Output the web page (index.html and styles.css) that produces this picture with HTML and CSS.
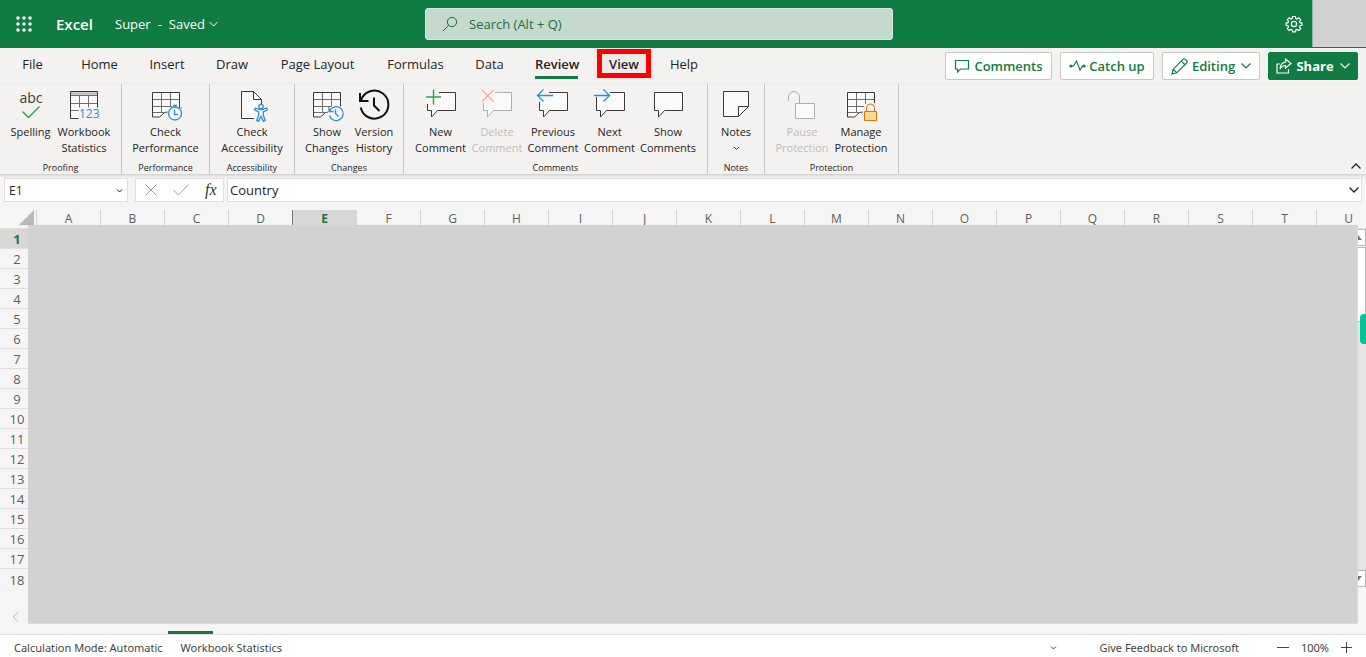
FILE: index.html
```html
<!DOCTYPE html>
<html lang="en">
<head>
<meta charset="utf-8">
<title>Super - Excel</title>
<link rel="stylesheet" href="styles.css">
</head>
<body>
<header class="topbar">
  <button class="waffle" aria-label="App launcher"><svg width="16" height="16" viewBox="0 0 16 16" fill="currentColor"><circle cx="2" cy="2" r="1.7"/><circle cx="8" cy="2" r="1.7"/><circle cx="14" cy="2" r="1.7"/><circle cx="2" cy="8" r="1.7"/><circle cx="8" cy="8" r="1.7"/><circle cx="14" cy="8" r="1.7"/><circle cx="2" cy="14" r="1.7"/><circle cx="8" cy="14" r="1.7"/><circle cx="14" cy="14" r="1.7"/></svg></button>
  <span class="brand">Excel</span>
  <button class="doc"><span>Super</span><span>-</span><span>Saved</span><svg width="9" height="6" viewBox="0 0 9 6"><path d="M.5 1l4 4 4-4"/></svg></button>
  <div class="search">
    <svg width="16" height="16" viewBox="0 0 16 16"><circle cx="10" cy="6" r="4.6"/><path d="M6.7 9.3L.8 15.2"/></svg>
    <input type="text" aria-label="Search" placeholder="Search (Alt + Q)">
  </div>
  <button class="gear" aria-label="Settings"><svg width="18" height="18" viewBox="0 0 18 18"><path d="M7.6 1.5h2.8l.4 2 1.2.5 1.8-1.2 1.9 1.9-1.2 1.8.5 1.2 1.9.4v2.2l-1.9.4-.5 1.2 1.2 1.8-1.9 1.9-1.8-1.2-1.2.5-.4 2H7.6l-.4-2-1.2-.5-1.8 1.2-1.9-1.9 1.2-1.8-.5-1.2-1.9-.4V8.100l1.900-.4.5-1.2-1.200-1.800 1.900-1.900L6 4l1.200-.5z"/><circle cx="9" cy="9" r="2.6"/></svg></button>
  <div class="account"></div>
</header>

<div class="tabrow">
  <nav class="tabs">
    <button>File</button><button>Home</button><button>Insert</button><button>Draw</button><button>Page Layout</button><button>Formulas</button><button>Data</button><button class="active"><span>Review</span></button><button class="marked">View</button><button>Help</button>
  </nav>
  <div class="actions">
    <button class="action comments"><svg width="16" height="16" viewBox="0 0 16 16"><path d="M1.500 2.500h13v8.500H6.500L3.500 14v-3h-2z"/></svg>Comments</button>
    <button class="action catchup"><svg width="17" height="16" viewBox="0 0 17 16"><path d="M2 8h2.500l3-5 3.500 9 2.500-4h2"/><circle cx="2" cy="8" r="1" fill="currentColor"/><circle cx="15" cy="8" r="1" fill="currentColor"/></svg>Catch up</button>
    <button class="action editing"><svg width="17" height="17" viewBox="0 0 17 17"><path d="M1 16l1.200-4.800L12 1.400a1.800 1.800 0 0 1 2.500 0l1.100 1.100a1.800 1.800 0 0 1 0 2.500L5.800 14.800zM10.300 3.100l3.600 3.600M2.200 11.200l3.600 3.600"/></svg>Editing<svg class="chev" width="10" height="6" viewBox="0 0 10 6"><path d="M.5.5L5 5 9.500.5"/></svg></button>
    <button class="action share"><svg width="16" height="16" viewBox="0 0 16 16"><path d="M4 6H1v9h11.500v-4M9.500 1l5.500 4.500-5.500 4.500V7.500C7 7.500 5.300 8.500 4 11c.3-4 2.500-6.500 5.500-7z"/></svg>Share<svg class="chev" width="10" height="6" viewBox="0 0 10 6"><path d="M.5.5L5 5 9.500.5"/></svg></button>
  </div>
</div>

<div class="ribbon">
  <section class="group">
    <div class="tools proofing">
      <button><svg class="ico" viewBox="0 0 36 36"><text class="abc" x="18" y="15" text-anchor="middle">abc</text><path class="grn" d="M9.500 23.500l6 6 11-11"/></svg>Spelling</button>
      <button><svg class="ico" viewBox="0 0 36 36"><path class="paper" d="M4.500 3.500h27v27h-27z"/><path class="band" d="M5 4h26v3H5z"/><path class="thin" d="M5 7.500h26M5 15.500h26M5 22.500h8M13.500 8v15M22.500 8v12"/><path class="erase" d="M12.500 19.500h20v12h-20z"/><text class="num" x="13" y="30">123</text></svg>Workbook<br>Statistics</button>
    </div><h2>Proofing</h2>
  </section>
  <section class="group">
    <div class="tools">
      <button><svg class="ico" viewBox="0 0 36 36"><path class="paper" d="M4.500 4.500h27v18l-15 2-5 4.500h-7z"/><path class="thin" d="M13.500 5v20M22.500 5v14M5 11.500h26M5 18.500h19M5 24.500h14"/><circle class="halo" cx="27" cy="25.500" r="7.500"/><circle class="blu fillbg" cx="27" cy="25.500" r="6.500"/><path class="blu" d="M25 17.500h4M27 18v1M26.500 21.500v5h3.500M32.500 19.500l1 1"/></svg>Check<br>Performance</button>
    </div><h2>Performance</h2>
  </section>
  <section class="group">
    <div class="tools">
      <button><svg class="ico" viewBox="0 0 36 36"><path class="paper" d="M7.500 3.500h12l8 8v19h-20z"/><path class="ink" d="M19.500 3.500v8h8"/><path class="erase" d="M20 19h5v-3h5v16H20z"/><g class="blu fillbg"><path d="M21.500 20l4 1.500h3l4-1.500 1 1.800-4.200 2.200v3.500l2 5-1.800.8-2.500-4.800-2.500 4.800-1.800-.8 2-5v-3.500l-4.200-2.200z"/><circle cx="27" cy="18.500" r="2.200"/></g></svg>Check<br>Accessibility</button>
    </div><h2>Accessibility</h2>
  </section>
  <section class="group">
    <div class="tools changes">
      <button><svg class="ico" viewBox="0 0 36 36"><path class="paper" d="M4.500 4.500h27v18l-15 2-5 4.500h-7z"/><path class="thin" d="M13.500 5v20M22.500 5v14M5 11.500h26M5 18.500h19M5 24.500h14"/><circle class="halo" cx="27" cy="25.500" r="8.500"/><path class="blu" d="M20.500 27.500a7 7 0 1 0 1-6l-1.500 2M20 19v4.500h4.500M26.500 21.500v4l3 3"/></svg>Show<br>Changes</button>
      <button><svg class="ico" viewBox="0 0 36 36"><path class="heavy" d="M5 12.500a14 14 0 1 1-.3 7M4 5v8h8.500M18 9.500v8l5.500 5.500"/></svg>Version<br>History</button>
    </div><h2>Changes</h2>
  </section>
  <section class="group">
    <div class="tools notes5">
      <button><svg class="ico" viewBox="0 0 36 36"><path class="paper" d="M4.500 4.500h28v18h-18l-6 6.500v-6.500h-4z"/><path class="erase" d="M2 1h14v7h2v4h-6v4H4z"/><path class="grn" d="M10.500 1.500v15M3 9h15"/></svg>New<br>Comment</button>
      <button class="off" disabled><svg class="ico" viewBox="0 0 36 36"><path class="paper" d="M4.500 4.500h28v18h-18l-6 6.500v-6.500h-4z"/><path class="erase" d="M2 1h14v12l-3 2H2z"/><path class="red" d="M3 2l11.500 11.500M14.500 2L3 13.500"/></svg>Delete<br>Comment</button>
      <button><svg class="ico" viewBox="0 0 36 36"><path class="paper" d="M4.500 4.500h28v18h-18l-6 6.500v-6.500h-4z"/><path class="erase" d="M1 1h13v5h5v4h-9v4H1z"/><path class="blu" d="M8.500 1.500l-6 6 6 6M2.500 7.500h15.500"/></svg>Previous<br>Comment</button>
      <button><svg class="ico" viewBox="0 0 36 36"><path class="paper" d="M4.500 4.500h28v18h-18l-6 6.500v-6.500h-4z"/><path class="erase" d="M1 2h15l4 5-7 7V9H1z"/><path class="blu" d="M11.500 1.500l6 6-6 6M17.500 7.500H2"/></svg>Next<br>Comment</button>
      <button><svg class="ico" viewBox="0 0 36 36"><path class="paper" d="M4.500 4.500h28v18h-18l-6 6.500v-6.500h-4z"/></svg>Show<br>Comments</button>
    </div><h2>Comments</h2>
  </section>
  <section class="group">
    <div class="tools">
      <button><svg class="ico" viewBox="0 0 36 36"><path class="paper" d="M5.500 3.500h25v15l-10 10h-15z"/><path class="ink" d="M20.500 28.500v-10h10"/></svg>Notes<svg class="drop" width="7" height="16" viewBox="0 0 7 16"><path class="ink" d="M1 7l2.500 2.500L6 7"/></svg></button>
    </div><h2>Notes</h2>
  </section>
  <section class="group">
    <div class="tools protect">
      <button class="off" disabled><svg class="ico" viewBox="0 0 36 36"><path class="paper" d="M11.500 15.500h19v15h-19z"/><path class="ink" d="M4.500 13V9a5.500 5.500 0 0 1 11 0v6"/></svg>Pause<br>Protection</button>
      <button><svg class="ico" viewBox="0 0 36 36"><path class="paper" d="M4.500 4.500h27v18l-15 2-5 4.500h-7z"/><path class="thin" d="M13.500 5v20M22.500 5v14M5 11.500h26M5 18.500h19M5 24.500h14"/><path class="erase" d="M20 22l2-6 4-2h4l4 3v17H20z"/><path class="lock" d="M21.500 23.500h12v9h-12z"/><path class="shackle" d="M23.500 23v-3a4 4 0 0 1 8 0v3"/></svg>Manage<br>Protection</button>
    </div><h2>Protection</h2>
  </section>
  <button class="collapse" aria-label="Collapse ribbon"><svg width="10" height="6" viewBox="0 0 10 6"><path d="M.5 5.500L5 1l4.500 4.500"/></svg></button>
</div>

<div class="formulabar">
  <div class="namebox"><input type="text" aria-label="Name box" value="E1"><svg width="7" height="6" viewBox="0 0 7 6"><path d="M1 1.500L3.500 4 6 1.500"/></svg></div>
  <div class="fxbox">
    <button aria-label="Cancel"><svg width="12" height="12" viewBox="0 0 12 12"><path d="M.5.5l11 11M11.500.5l-11 11"/></svg></button>
    <button aria-label="Enter"><svg width="16" height="12" viewBox="0 0 16 12"><path d="M.5 6l5 5L15.500.5"/></svg></button>
    <button class="fx" aria-label="Insert function">fx</button>
  </div>
  <div class="formula"><input type="text" aria-label="Formula" value="Country"><svg width="10" height="6" viewBox="0 0 10 6"><path d="M.5.5L5 5 9.500.5"/></svg></div>
</div>

<main class="sheet">
  <div class="gridwrap">
    <table class="grid">
      <thead><tr><th class="corner"><svg width="15" height="15" viewBox="0 0 15 15"><path d="M15 0v15H0z"/></svg></th><th>A</th><th>B</th><th>C</th><th>D</th><th class="sel">E</th><th>F</th><th>G</th><th>H</th><th>I</th><th>J</th><th>K</th><th>L</th><th>M</th><th>N</th><th>O</th><th>P</th><th>Q</th><th>R</th><th>S</th><th>T</th><th>U</th></tr></thead>
      <tbody>
        <tr><th class="sel">1</th></tr><tr><th>2</th></tr><tr><th>3</th></tr><tr><th>4</th></tr><tr><th>5</th></tr><tr><th>6</th></tr><tr><th>7</th></tr><tr><th>8</th></tr><tr><th>9</th></tr><tr><th>10</th></tr><tr><th>11</th></tr><tr><th>12</th></tr><tr><th>13</th></tr><tr><th>14</th></tr><tr><th>15</th></tr><tr><th>16</th></tr><tr><th>17</th></tr><tr><th>18</th></tr>
      </tbody>
    </table>
  </div>
  <div class="scroll"><span class="arrow"><svg width="8" height="5" viewBox="0 0 8 5"><path d="M4 0l4 5H0z"/></svg></span><span class="thumb"></span><span class="track"></span><span class="arrow"><svg width="8" height="5" viewBox="0 0 8 5"><path d="M0 0h8L4 5z"/></svg></span></div>
  <div class="sheettabs"><button aria-label="Previous sheets"><svg width="7" height="10" viewBox="0 0 7 10"><path d="M6 .5L1 5l5 4.500"/></svg></button><span class="current"></span></div>
  <div class="cover"></div>
  <div class="handle"></div>
</main>

<footer class="status">
  <span>Calculation Mode: Automatic</span>
  <span>Workbook Statistics</span>
  <svg class="more" width="7" height="6" viewBox="0 0 7 6"><path d="M1 1.500L3.500 4 6 1.500"/></svg>
  <button class="feedback">Give Feedback to Microsoft</button>
  <button aria-label="Zoom out"><svg width="12" height="12" viewBox="0 0 12 12"><path d="M0 5.500h12"/></svg></button>
  <span class="zoom">100%</span>
  <button aria-label="Zoom in"><svg width="12" height="12" viewBox="0 0 12 12"><path d="M0 5.500h11M5.500 0v11"/></svg></button>
</footer>
</body>
</html>
```
FILE: styles.css
```css
* { box-sizing: border-box; }
body {
  margin: 0;
  min-height: 100vh;
  display: flex;
  flex-direction: column;
  overflow: hidden;
  background: #f5f5f5;
  color: #252423;
  font: 13px/20px "Open Sans", "Noto Sans", sans-serif;
}
button, input { font: inherit; color: inherit; border: 0; background: none; padding: 0; margin: 0; }
svg { flex: none; fill: none; stroke: currentColor; }

.topbar { height: 48px; display: flex; align-items: center; background: #107c41; color: #fff; position: relative; }
.waffle { margin-left: 16px; width: 16px; height: 16px; }
.waffle svg { display: block; stroke: none; fill: currentColor; }
.brand { margin-left: 24px; font-size: 15px; font-weight: 600; width: 59px; }
.doc { display: flex; align-items: center; gap: 7px; }
.doc svg { margin-left: -3px; }
.search {
  position: absolute; left: 425px; right: 473px; top: 8px; height: 32px;
  display: flex; align-items: center; gap: 11px; padding: 0 16px;
  background: #c5dacd; border: 1px solid #d8e8de; border-radius: 3px; color: #1e6b41;
}
.search input { flex: 1; min-width: 0; outline: 0; }
.search input::placeholder { color: #1e6b41; opacity: 1; }
.gear { margin-left: auto; margin-right: 9px; width: 18px; height: 18px; }
.gear svg { display: block; stroke-width: 1.2; }
.account { width: 54px; height: 47px; align-self: flex-start; background: #d2d2d2; border-left: 1px solid #8ab99d; }

.tabrow { height: 36px; display: flex; justify-content: space-between; background: #f3f2f1; }
.tabs { display: grid; grid-template-columns: 65px 69px 66px 64px 107px 89px 59px 75px 60px 60px; height: 32px; }
.tabs .active { font-weight: 600; }
.active span { display: block; margin: 0 16px; height: 30px; padding-top: 5px; border-bottom: 3px solid #107c41; white-space: nowrap; }
.marked { font-weight: 600; background: #edebe9; position: relative; }
.marked::after { content: ""; position: absolute; inset: 1px 3px 2px; border: 5px solid #f00; }
.actions { display: flex; gap: 8px; padding: 4px 8px 4px 0; }
.action {
  display: flex; align-items: center; justify-content: center; gap: 4px; height: 28px;
  background: #fff; color: #107c41; border: 1px solid #c8c6c4; border-radius: 2px; font-weight: 600;
}
.action svg { stroke-width: 1.2; }
.comments { width: 107px; }
.catchup { width: 94px; gap: 3px; }
.editing { width: 98px; }
.share { width: 90px; background: #107c41; border-color: #107c41; color: #fff; font-weight: 700; }
.chev { margin-left: 2px; }

.ribbon { height: 91px; display: grid; grid-template-columns: 122px 88px 85px 109px 304px 57px 134px 1fr; background: #f3f2f1; border-bottom: 1px solid #d6d4d2; box-shadow: 0 1px 3px #0002; position: relative; }
.group { height: 90px; border-right: 1px solid #c8c6c4; display: flex; flex-direction: column; align-items: center; }
.group h2 { margin: 0; font-size: 9px; line-height: 12px; font-weight: 400; }
.tools { flex: 1; display: flex; justify-content: center; align-self: stretch; }
.tools button { display: block; text-align: center; font-size: 11px; line-height: 16px; white-space: nowrap; align-self: flex-start; padding-top: 4px; }
.proofing, .changes, .notes5, .protect { display: grid; justify-content: start; padding-left: 8px; }
.proofing { grid-template-columns: 45px 62px; }
.changes { grid-template-columns: 48px 46px; }
.notes5 { grid-template-columns: 57px 56px 56px 57px 60px; }
.protect { grid-template-columns: 58px 60px; }
.ico { display: block; width: 36px; height: 36px; margin: 0 auto; }
.drop { display: block; margin: 0 auto; }
.paper { fill: #fafafa; stroke: #3b3a39; }
.ink { stroke: #3b3a39; }
.thin { stroke: #6f6e6d; }
.band { fill: #c8c6c4; stroke: none; }
.erase, .halo { fill: #f5f4f3; stroke: none; }
.grn { stroke: #2ea04d; stroke-width: 1.4; }
.blu { stroke: #2b8fd0; stroke-width: 1.3; }
.fillbg { fill: #f8f8f8; }
.red { stroke: #f4aaa5; stroke-width: 1.3; }
.heavy { stroke: #111; stroke-width: 2; }
.lock { fill: #f9d98c; stroke: #df7112; }
.shackle { stroke: #df7112; }
.abc { font-size: 14px; fill: #3b3a39; stroke: none; }
.num { font-size: 12px; fill: #2b8fd0; stroke: none; }
.off { color: #bebcba; }
.off .paper, .off .ink { stroke: #b0aeac; }
.collapse { align-self: end; justify-self: end; height: 16px; width: 10px; margin-right: 5px; }
.collapse svg { display: block; stroke: #252423; stroke-width: 1.3; }

.formulabar { display: flex; padding: 3px 4px 4px; height: 31px; }
.namebox, .fxbox, .formula { display: flex; align-items: center; height: 24px; background: #fff; border: 1px solid #e1dfdd; }
.namebox { width: 124px; padding: 2px 4px 0; margin-right: 7px; font-size: 12px; }
.namebox input, .formula input { flex: 1; min-width: 0; outline: 0; }
.fxbox { width: 89px; padding: 0 9px; gap: 16px; margin-right: 3px; color: #a19f9d; }
.fxbox button { display: flex; }
.fxbox .fx { font: italic 16px/20px "Liberation Serif", serif; color: #323130; }
.formula { flex: 1; padding: 0 2px; }
.formula svg { stroke-width: 1.3; }

.sheet { flex: 1; display: grid; grid-template-columns: 1fr 16px; grid-template-rows: 1fr 42px; position: relative; }
.gridwrap { grid-column: 1 / 3; grid-row: 1; overflow: hidden; padding-top: 4px; }
.grid { table-layout: fixed; border-collapse: separate; border-spacing: 0; width: 1380px; }
.grid th { font-size: 12px; font-weight: 400; padding: 0; color: #605e5c; line-height: 18px; }
.grid thead th { height: 19px; width: 64px; border-left: 1px solid #d6d6d6; border-bottom: 1px solid #e1dfdd; line-height: 18px; vertical-align: top; }
.grid thead .corner { width: 36px; border-left: 0; }
.corner svg { display: block; margin-left: 19px; fill: #b8b8b8; stroke: none; }
.grid tbody th { height: 20px; border-bottom: 1px solid #e1dfdd; padding: 1px 2px 0 0; font-size: 13px; }
.grid tbody tr:last-child th { border-bottom: 0; }
.grid .sel, .grid thead .sel { background: #d8d7d5; color: #217346; font-weight: 700; }
.grid thead .sel { border-left-color: #777; }
.scroll { grid-column: 2; grid-row: 1; margin-top: 23px; height: 358px; display: flex; flex-direction: column; z-index: 1; }
.arrow { height: 17px; border: 1px solid #b8b8b8; background: #fff; display: flex; align-items: center; justify-content: center; }
.arrow svg { fill: #777; stroke: none; }
.thumb { height: 75px; margin-top: 1px; background: #fff; border: 1px solid #b8b8b8; }
.track { flex: 1; background: #e6e6e6; }
.sheettabs { grid-column: 1 / 3; grid-row: 2; display: flex; padding-left: 12px; }
.sheettabs button { color: #b8b8b8; align-self: flex-start; width: 7px; margin: 20px 149px 0 0; }
.sheettabs svg { display: block; }
.current { align-self: flex-end; width: 45px; height: 3px; background: #217346; }
.cover { position: absolute; z-index: 2; inset: 19px 8px 10px 28px; background: #d2d2d2; border: 1px solid #dcdcdc; border-top: 0; border-left: 0; }
.handle { position: absolute; z-index: 3; right: 0; top: 108px; width: 6px; height: 30px; background: #00c795; border-radius: 4px 0 0 4px; }

.status { height: 23px; display: flex; align-items: center; padding: 3px 13px 0 14px; background: #fff; border-top: 1px solid #e1dfdd; color: #444; font-family: "Noto Sans", "Open Sans", sans-serif; font-size: 11px; gap: 18px; white-space: nowrap; }
.status button { display: flex; }
.more { margin-left: auto; }
.feedback { margin: 0 20px 0 24px; }
.status .zoom { margin: 0 -6px; }
```
